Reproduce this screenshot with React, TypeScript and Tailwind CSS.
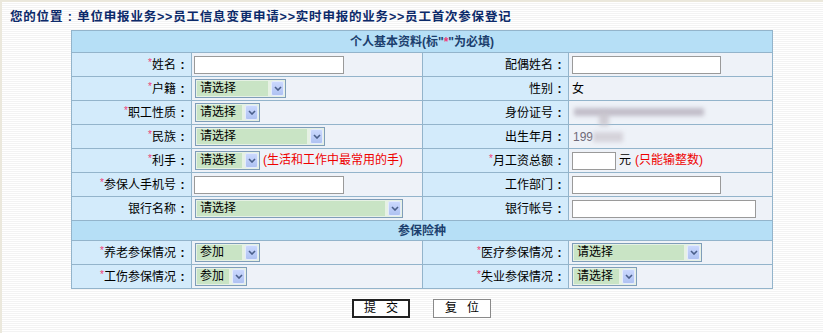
import React from "react";

function Star() {
  return <span className="text-[#f03c78] text-[10px] align-top leading-[14px]">*</span>;
}

function Chevron() {
  return (
    <svg width="8" height="5" viewBox="0 0 8 5">
      <path d="M1 1 L4 4 L7 1" stroke="#4a5f8a" strokeWidth="1.6" fill="none" />
    </svg>
  );
}

function Sel({ w, text }: { w: string; text: string }) {
  return (
    <div className={`inline-flex h-[19px] border border-[#7f9db9] bg-[#e6f1e4] p-[1px] align-middle ${w}`}>
      <div className="flex-1 bg-[#c9e4c5] pl-[3px] text-[12px] leading-[15px] text-black">{text}</div>
      <div className="ml-[3px] flex w-[13px] items-center justify-center rounded-[2px] border border-[#e4ebfd] bg-gradient-to-b from-[#cad8fd] to-[#afc2f2]">
        <Chevron />
      </div>
    </div>
  );
}

function Inp({ w }: { w: string }) {
  return <div className={`inline-block h-[18px] border border-[#9a9a9a] bg-white align-middle ${w}`} />;
}

function Colon() {
  return <span className="inline-block w-[13px] text-center font-bold">:</span>;
}

function Label({ star, text }: { star?: boolean; text: string }) {
  return (
    <td className="bg-[#d3ebfb] border border-[#93b4cb] pr-[2px] text-right whitespace-nowrap">
      {star && <Star />}
      {text}
      <Colon />
    </td>
  );
}

function Val({ children, cls = "" }: { children?: React.ReactNode; cls?: string }) {
  return (
    <td className={`bg-[#eef2f8] border border-[#93b4cb] pl-[2px] whitespace-nowrap ${cls}`}>
      {children}
    </td>
  );
}

export default function App() {
  return (
    <div className="relative h-[333px] w-[823px] overflow-hidden border-t-2 border-l-2 border-[#ebe8dc] bg-[repeating-linear-gradient(to_bottom,#ffffff_0px,#ffffff_1px,#f3f3f3_1px,#f3f3f3_2px)] [font-family:'Liberation_Sans','Noto_Sans_CJK_SC',sans-serif] text-[12px] text-black">
      <div className="pl-[8px] pt-[6px] h-[18px] leading-[18px] text-[12.5px] font-bold tracking-[0.8px] text-[#0c2a6a]">
        您的位置<span className="inline-block w-[14px] text-center">:</span>单位申报业务&gt;&gt;员工信息变更申请&gt;&gt;实时申报的业务&gt;&gt;员工首次参保登记
      </div>
      <table className="ml-[69px] mt-[10px] w-[701px] border-collapse table-fixed">
        <colgroup>
          <col className="w-[120px]" />
          <col className="w-[231px]" />
          <col className="w-[146px]" />
          <col className="w-[204px]" />
        </colgroup>
        <tbody>
          <tr className="h-[22px]">
            <td colSpan={4} className="bg-[#b6dff6] border border-[#93b4cb] text-center font-bold text-[#1c3f6e]">
              个人基本资料(标"<span className="text-[#f03c78]">*</span>"为必填)
            </td>
          </tr>
          <tr className="h-[24px]">
            <Label star text="姓名" />
            <Val><Inp w="w-[150px]" /></Val>
            <Label text="配偶姓名" />
            <Val><span className="ml-[1px]"><Inp w="w-[149px]" /></span></Val>
          </tr>
          <tr className="h-[24px]">
            <Label star text="户籍" />
            <Val><span className="ml-[1px]"><Sel w="w-[91px]" text="请选择" /></span></Val>
            <Label text="性别" />
            <Val><span className="ml-[1px]">女</span></Val>
          </tr>
          <tr className="h-[24px]">
            <Label star text="职工性质" />
            <Val><span className="ml-[1px]"><Sel w="w-[65px]" text="请选择" /></span></Val>
            <Label text="身份证号" />
            <Val>
              <div className="relative h-[20px] w-[190px]">
                <div className="absolute left-[3px] top-[5px] h-[8px] w-[130px] bg-[#b7b1be] blur-[2px] opacity-80" />
                <div className="absolute left-[28px] top-[9px] h-[14px] w-[10px] bg-[#c8c4cc] blur-[2px] opacity-80" />
              </div>
            </Val>
          </tr>
          <tr className="h-[24px]">
            <Label star text="民族" />
            <Val><span className="ml-[1px]"><Sel w="w-[130px]" text="请选择" /></span></Val>
            <Label text="出生年月" />
            <Val>
              <span className="ml-[2px] text-[#6e6a78]">199</span>
              <span className="inline-block h-[10px] w-[30px] align-middle bg-[#cfcbd3] blur-[2px] opacity-80" />
            </Val>
          </tr>
          <tr className="h-[24px]">
            <Label star text="利手" />
            <Val>
              <span className="ml-[1px]"><Sel w="w-[65px]" text="请选择" /></span>
              <span className="ml-[3px] text-[#ee0000]">(生活和工作中最常用的手)</span>
            </Val>
            <Label star text="月工资总额" />
            <Val>
              <span className="ml-[1px]"><Inp w="w-[44px]" /></span>
              <span className="ml-[3px]">元</span>
              <span className="ml-[4px] text-[#ee0000]">(只能输整数)</span>
            </Val>
          </tr>
          <tr className="h-[24px]">
            <Label star text="参保人手机号" />
            <Val><Inp w="w-[150px]" /></Val>
            <Label text="工作部门" />
            <Val><span className="ml-[1px]"><Inp w="w-[149px]" /></span></Val>
          </tr>
          <tr className="h-[24px]">
            <Label text="银行名称" />
            <Val><span className="ml-[1px]"><Sel w="w-[208px]" text="请选择" /></span></Val>
            <Label text="银行帐号" />
            <Val><span className="ml-[1px]"><Inp w="w-[184px]" /></span></Val>
          </tr>
          <tr className="h-[20px]">
            <td colSpan={4} className="bg-[#b6dff6] border border-[#93b4cb] text-center font-bold text-[#1c3f6e]">
              参保险种
            </td>
          </tr>
          <tr className="h-[24px]">
            <Label star text="养老参保情况" />
            <Val><span className="ml-[1px]"><Sel w="w-[65px]" text="参加" /></span></Val>
            <Label star text="医疗参保情况" />
            <Val><span className="ml-[1px]"><Sel w="w-[130px]" text="请选择" /></span></Val>
          </tr>
          <tr className="h-[24px]">
            <Label star text="工伤参保情况" />
            <Val><span className="ml-[1px]"><Sel w="w-[52px]" text="参加" /></span></Val>
            <Label star text="失业参保情况" />
            <Val><span className="ml-[1px]"><Sel w="w-[65px]" text="请选择" /></span></Val>
          </tr>
        </tbody>
      </table>
      <div className="ml-[69px] mt-[10px] flex w-[701px] justify-center gap-[23px]">
        <button className="h-[19px] w-[58px] border-2 border-[#222] bg-white text-[12px] leading-[15px] tracking-[10px] pl-[10px]">
          提交
        </button>
        <button className="h-[19px] w-[58px] border border-[#8a8a8a] bg-white text-[12px] leading-[17px] tracking-[10px] pl-[10px]">
          复位
        </button>
      </div>
    </div>
  );
}
